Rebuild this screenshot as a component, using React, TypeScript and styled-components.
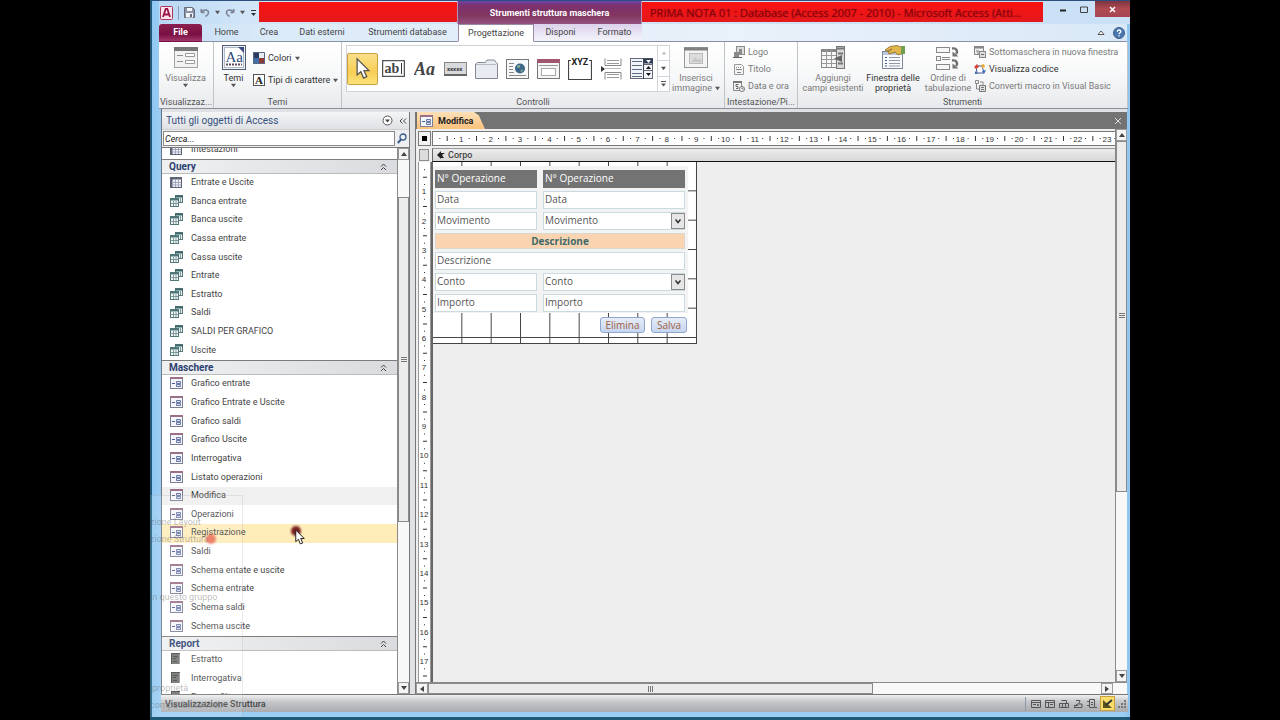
import React, { useEffect, useRef, useState } from 'react';
import styled, { createGlobalStyle, css } from 'styled-components';

const UI = "Roboto, 'Open Sans', 'Noto Sans', sans-serif";
const DOC = "'Open Sans', 'Noto Sans', sans-serif";

const GlobalStyle = createGlobalStyle`
  *, *::before, *::after { box-sizing: border-box; }
  body { margin: 0; background: #000; }
  button, input, select { font: inherit; color: inherit; margin: 0; padding: 0; border: 0; background: none; border-radius: 0; }
  ul { list-style: none; margin: 0; padding: 0; }
  svg { display: block; flex: none; }
`;

/* ---------- window frame ---------- */
const Screen = styled.div`
  display: flex;
  height: 100vh;
  padding: 0 150px;
  background: #000;
  font: 9px/12px ${UI};
  color: #444;
  overflow: hidden;
`;
const Frame = styled.div`
  position: relative;
  display: flex;
  flex-direction: column;
  flex: 1;
  min-width: 0;
  padding: 2px 3px 5px 9px;
  border: solid #1e5a78;
  border-width: 0 0 3px 2px;
  border-top: 1px solid #2c4f80;
  background: linear-gradient(90deg, #8fc8f2, #9ccdf3 10px, #9ccdf3 calc(100% - 6px), #8cc3ef);
`;
const TitleBar = styled.header`
  display: flex;
  height: 23px;
  margin: -2px -3px 0 -2px;
  background: linear-gradient(90deg, #b9d8f4, #d2e6f8 90px, #c9e0f6);
`;
const QuickAccess = styled.div`
  display: flex;
  align-items: center;
  gap: 5px;
  width: 100px;
  padding: 0 0 0 1px;
`;
const IconButton = styled.button`
  display: flex;
  align-items: center;
  justify-content: center;
`;
const VLine = styled.span`
  width: 1px;
  height: 14px;
  background: #8c9aae;
`;
const RedBlock = styled.div<{ $grow?: boolean }>`
  flex: ${p => (p.$grow ? '1 1 0' : '0 0 198px')};
  min-width: 0;
  margin-top: 1px;
  height: 20px;
  padding: 0 8px 0 8px;
  background: linear-gradient(#fb1212, #e3191b);
  color: rgba(110, 0, 12, 0.75);
  font: 11px/22px ${DOC};
  text-shadow: 0 0 1px rgba(110, 0, 12, 0.6);
  white-space: nowrap;
  overflow: hidden;
`;
const ContextTitle = styled.div`
  flex: 0 0 185px;
  border: solid #b792b8;
  border-width: 0 1px;
  background: linear-gradient(#6a45a8, #7b3270 4px, #813560 14px, #92527f);
  color: #fff;
  font: 700 9px/25px ${UI};
  text-align: center;
`;
const WindowButtons = styled.div`
  display: flex;
  flex: 0 0 87px;
  padding-left: 9px;
  button { height: 16px; flex: 0 0 21px; }
  button:last-child { flex: 0 0 35px; margin-left: 1px; background: linear-gradient(#7c3540, #b24a52 50%, #a54651); }
`;

/* ---------- ribbon ---------- */
const TabRow = styled.nav`
  display: flex;
  align-items: stretch;
  height: 18px;
  margin: 0 0 0 -2px;
  background: linear-gradient(90deg, #c4ddf5, #dcebf9 120px, #e9f1fa 60%, #d9e8f7);
`;
const RibbonTab = styled.button<{ $w: number; $kind?: 'file' | 'active' | 'context' }>`
  width: ${p => p.$w}px;
  font-size: 9px;
  line-height: 17px;
  text-align: center;
  border-bottom: 1px solid #8a93a2;
  white-space: nowrap;
  ${p => p.$kind === 'file' && css`
    background: linear-gradient(#8b2050, #7a0f43 60%, #a2386c);
    color: #fff; font-weight: 700; border-radius: 3px 3px 0 0; border-bottom-color: #7a0f43;`}
  ${p => p.$kind === 'active' && css`
    background: #fff; border: 1px solid #9a8aa6; border-bottom-color: #fff; line-height: 15px;`}
  ${p => p.$kind === 'context' && css`background: linear-gradient(#dcd2ec, #f4f4fb);`}
`;
const TabFill = styled.div`
  display: flex;
  flex: 1;
  align-items: center;
  justify-content: flex-end;
  gap: 8px;
  padding-right: 2px;
  border-bottom: 1px solid #8a93a2;
`;
const Ribbon = styled.section`
  display: flex;
  height: 67px;
  margin: 0 -1px 0 -2px;
  background: linear-gradient(#fff, #f7f8f9 50%, #e7e9ec);
  border-bottom: 1px solid #8b8f96;
`;
const Group = styled.div<{ $w?: number }>`
  display: flex;
  flex-direction: column;
  flex: ${p => (p.$w ? `0 0 ${p.$w}px` : '1 1 0')};
  min-width: 0;
  border-right: 1px solid #c0c4c8;
`;
const GroupBody = styled.div<{ $pad?: number; $gap?: number }>`
  display: flex;
  flex: 1;
  gap: ${p => p.$gap ?? 0}px;
  padding: 3px 0 0 ${p => p.$pad ?? 0}px;
`;
const GroupLabel = styled.div`
  height: 12px;
  text-align: center;
  white-space: nowrap;
  color: #555;
`;
const LargeButton = styled.button<{ $w: number; $dim?: boolean }>`
  display: flex;
  flex-direction: column;
  align-items: center;
  flex: 0 0 ${p => p.$w}px;
  line-height: 10px;
  white-space: nowrap;
  color: ${p => (p.$dim ? '#7a7a7a' : '#333')};
`;
const IconSlot = styled.span`
  display: flex;
  align-items: center;
  height: 25px;
  margin-bottom: 3px;
`;
const Caption = styled.span`
  display: flex;
  align-items: center;
  gap: 3px;
`;
const SmallStack = styled.div<{ $gap: number; $top?: number }>`
  display: flex;
  flex-direction: column;
  gap: ${p => p.$gap}px;
  padding-top: ${p => p.$top ?? 0}px;
`;
const SmallButton = styled.button<{ $dim?: boolean }>`
  display: flex;
  align-items: center;
  gap: 3px;
  height: 14px;
  white-space: nowrap;
  color: ${p => (p.$dim ? '#7a7a7a' : '#333')};
`;
const Gallery = styled.div`
  display: flex;
  height: 47px;
  width: 324px;
  background: #fff;
  border: 1px solid #d0d3d8;
`;
const Tool = styled.button<{ $on?: boolean }>`
  display: flex;
  align-items: center;
  justify-content: center;
  align-self: center;
  width: 31px;
  height: 32px;
  ${p => p.$on && css`
    background: linear-gradient(#fbe08a, #f8cf55 60%, #fce27a);
    border: 1px solid #c9a13d; border-radius: 2px;`}
`;
const GalleryScroll = styled.div`
  display: flex;
  flex-direction: column;
  width: 12px;
  border-left: 1px solid #d0d3d8;
  button { flex: 1; display: flex; align-items: center; justify-content: center; }
  button + button { border-top: 1px solid #d0d3d8; }
`;

/* ---------- workspace ---------- */
const Work = styled.main`
  display: flex;
  flex: 1;
  min-height: 0;
  gap: 5px;
  padding-top: 3px;
  background: #dfe1e5;
  border-left: 1px solid #6d7582;
`;
const NavPane = styled.aside`
  display: flex;
  flex-direction: column;
  flex: 0 0 248px;
  min-height: 0;
  background: #fff;
  border-right: 1px solid #777;
`;
const NavTitle = styled.div`
  display: flex;
  align-items: center;
  height: 18px;
  padding: 0 2px 0 4px;
  gap: 6px;
  background: linear-gradient(#f4f5f6, #dfe1e5);
  border-bottom: 1px solid #d0d0d0;
  color: #36507f;
  span { flex: 1; font-size: 10px; }
`;
const SearchRow = styled.div`
  display: flex;
  height: 18px;
  padding: 1px 0;
  background: #eceef0;
  border-bottom: 1px solid #777;
  input { flex: 1; min-width: 0; padding-left: 1px; margin-left: 1px; background: #fff; border: 1px solid #8a8a8a; font-style: italic; }
  input::placeholder { color: #222; opacity: 1; }
  button { width: 14px; }
`;
const NavBody = styled.div`
  display: flex;
  flex: 1;
  min-height: 0;
`;
const NavList = styled.div`
  flex: 1;
  min-width: 0;
  overflow: hidden;
`;
const Clipped = styled.div`
  display: flex;
  align-items: flex-end;
  gap: 8px;
  height: 11px;
  overflow: hidden;
  padding: 0 0 4px 8px;
`;
const SectionHead = styled.button`
  display: flex;
  align-items: center;
  justify-content: space-between;
  width: 100%;
  height: 15px;
  padding: 0 10px 0 7px;
  background: linear-gradient(90deg, #eef0f2, #d9dbde);
  border-top: 1px solid #7c7c7c;
  border-bottom: 1px solid #bbb;
  color: #2b3f70;
  font: 700 10px/12px ${UI};
`;
const Rows = styled.ul<{ $h: number }>`
  display: flex;
  flex-direction: column;
  height: ${p => p.$h}px;
  li { flex: 1; display: flex; }
`;
const NavItem = styled.button<{ $bg?: string }>`
  display: flex;
  align-items: center;
  gap: 8px;
  width: 100%;
  padding: 0 0 2px 8px;
  background: ${p => p.$bg ?? 'transparent'};
  text-align: left;
`;
const VScroll = styled.div`
  display: flex;
  flex-direction: column;
  flex: 0 0 12px;
  background: #f8f8f8;
  border-left: 1px solid #8a8a8a;
`;
const HScroll = styled.div`
  display: flex;
  height: 12px;
  background: #f8f8f8;
  border-top: 1px solid #8a8a8a;
`;
const Arrow = styled.button`
  display: flex;
  align-items: center;
  justify-content: center;
  flex: 0 0 12px;
  background: #f4f4f4;
  border: 1px solid #9a9a9a;
`;
const Gap = styled.div<{ $n: number }>`flex: ${p => p.$n} 1 0;`;
const Thumb = styled.div<{ $n: number }>`
  display: flex;
  align-items: center;
  justify-content: center;
  flex: ${p => p.$n} 1 0;
  background: #ececec;
  border: 1px solid #8a8a8a;
`;

const DocPane = styled.section`
  display: flex;
  flex-direction: column;
  flex: 1;
  min-width: 0;
  border-left: 1px solid #777;
  background: #eee;
`;
const DocTabs = styled.div`
  display: flex;
  justify-content: space-between;
  height: 17px;
  padding: 0 5px 0 1px;
  background: #737373;
`;
const DocTab = styled.button`
  display: flex;
  align-items: center;
  gap: 5px;
  width: 68px;
  padding-left: 3px;
  background: linear-gradient(#fde0b8, #fbc17c);
  clip-path: polygon(0 0, 84% 0, 91% 20%, 100% 100%, 0 100%);
  color: #222;
  font-weight: 700;
`;
const DocBody = styled.div`
  display: flex;
  flex: 1;
  min-height: 0;
`;
const Design = styled.div`
  display: grid;
  flex: 1;
  min-width: 0;
  grid-template-columns: 15px minmax(0, 1fr);
  grid-template-rows: 19px 14px minmax(0, 1fr);
`;
const Corner = styled.div`
  margin: 2px 0 2px 2px;
  border: 1px solid #777;
  background: #f3f3f3;
  display: flex;
  align-items: center;
  justify-content: center;
`;
const HRuler = styled.div`
  margin: 2px 0 2px 1px;
  border: solid #777;
  border-width: 1px 0 1px 1px;
  background: #fff;
  overflow: hidden;
`;
const RulerKnob = styled.div`
  margin: 1px 2px 1px 3px;
  background: #dcdcdc;
  border: 1px solid #8c8c8c;
`;
const SectionBar = styled.div`
  display: flex;
  align-items: center;
  gap: 3px;
  padding-left: 4px;
  margin-left: 1px;
  background: linear-gradient(#ececec, #d8d8d8);
  border-top: 1px solid #999;
  border-left: 1px solid #666;
  border-bottom: 1px solid #111;
  font-weight: 500;
`;
const VRuler = styled.div`
  margin-left: 2px;
  background: #fff;
  border-right: 1px solid #999;
  border-left: 1px solid #999;
  overflow: hidden;
`;
const Canvas = styled.div`
  border-left: 2px solid #666;
  background: #eee;
`;
const FormPage = styled.div`
  width: 264px;
  height: 182px;
  padding-top: 4px;
  border: solid #444;
  border-width: 0 1px 1px 0;
  background-color: #fff;
  background-image: linear-gradient(90deg, transparent calc(100% - 1px), #444 0), linear-gradient(transparent calc(100% - 1px), #444 0);
  background-size: calc(264px / 9) calc(176px / 6);
`;
const FormPanel = styled.form`
  width: 255px;
  display: grid;
  grid-template-columns: 102px 142px;
  grid-template-rows: repeat(7, 1fr);
  column-gap: 6px;
  row-gap: 3px;
  height: 147px;
  padding: 4px 2px 3px 2px;
  background: #f3f3f3;
  font: 10px/14px ${DOC};
  color: #555;
`;
const cell = css<{ $dark?: boolean; $wide?: boolean }>`
  min-width: 0;
  width: 100%;
  padding: 0 2px 2px 1px;
  border: 1px solid #c9dbe0;
  background: #fff;
  ${p => p.$dark && css`background: #737373; border-color: #737373; color: #fff;`}
  ${p => p.$wide && css`grid-column: 1 / -1;`}
`;
const FieldLabel = styled.label`${cell}`;
const Field = styled.input`${cell}`;
const Banner = styled.div`
  grid-column: 1 / -1;
  background: #fad3b1;
  border: 1px solid #d8d8d0;
  color: #3f6a6a;
  font-weight: 700;
  text-align: center;
`;
const Combo = styled.div`
  position: relative;
  display: flex;
  min-width: 0;
  svg { position: absolute; right: 0; top: 1px; pointer-events: none; }
`;
const Select = styled.select`${cell} appearance: none;`;
const FormActions = styled.div`
  display: flex;
  justify-content: flex-end;
  gap: 6px;
  padding: 4px 9px 0 0;
`;
const FormButton = styled.button<{ $w: number }>`
  width: ${p => p.$w}px;
  height: 16px;
  border: 1px solid #8fa6cf;
  border-radius: 3px;
  background: linear-gradient(#e6edf8, #c6d5ee);
  color: #a0603f;
  font: 10px/13px ${DOC};
`;

const StatusBar = styled.footer`
  display: flex;
  align-items: center;
  height: 18px;
  margin-right: -1px;
  padding: 0 2px 0 4px;
  gap: 2px;
  background: linear-gradient(#f0f0f0, #c4c6c9 40%, #a9abae);
  border-top: 1px solid #777;
  font-weight: 500;
  > span:first-child { flex: 1; }
`;
const ViewButtons = styled.div`
  display: flex;
  align-items: center;
  gap: 2px;
  padding-left: 2px;
`;
const ViewButton = styled.button<{ $on?: boolean }>`
  display: flex;
  align-items: center;
  justify-content: center;
  width: ${p => (p.$on ? 15 : 12)}px;
  height: 15px;
  ${p => p.$on && css`background: #fbdd6c; border: 1px solid #c9a13d;`}
`;

/* ---------- overlays ---------- */
const GhostMenu = styled.div`
  position: absolute;
  left: -2px;
  top: 494px;
  width: 93px;
  height: 222px;
  overflow: hidden;
  background: rgba(255, 255, 255, 0.12);
  border: solid rgba(120, 120, 120, 0.15);
  border-width: 1px 1px 0 0;
  color: rgba(90, 90, 90, 0.42);
  pointer-events: none;
  white-space: nowrap;
`;
const GhostLine = styled.div<{ $top: number; $left?: number }>`
  position: absolute;
  left: ${p => p.$left ?? 0}px;
  top: ${p => p.$top}px;
`;
const Dot = styled.div<{ $x: number; $y: number; $c: string }>`
  position: absolute;
  left: ${p => p.$x}px;
  top: ${p => p.$y}px;
  width: 10px;
  height: 10px;
  border-radius: 50%;
  background: ${p => p.$c};
  filter: blur(1px);
`;
const Pointer = styled.div`
  position: absolute;
  left: 143px;
  top: 528px;
`;

/* ---------- icons ---------- */
const Tri = ({ d = 'down', c = '#444', s = 6 }: { d?: 'up' | 'down' | 'left' | 'right'; c?: string; s?: number }) => {
  const p = { down: 'M0 1h6L3 5z', up: 'M0 5h6L3 1z', left: 'M5 0v6L1 3z', right: 'M1 0v6l4-3z' }[d];
  return <svg width={s} height={s} viewBox="0 0 6 6"><path d={p} fill={c} /></svg>;
};
const Drop = () => <Tri s={5} c="#555" />;
const Chevrons = () => (
  <svg width="7" height="8" viewBox="0 0 7 8" fill="none" stroke="#444"><path d="M1 3.5 3.5 1 6 3.5M1 7 3.5 4.5 6 7" /></svg>
);
const FormIcon = () => (
  <svg width="13" height="12" viewBox="0 0 13 12">
    <rect x=".5" y=".5" width="12" height="11" fill="#f4f6fb" stroke="#7b7f95" />
    <path d="M0 1h13" stroke="#9c6f88" strokeWidth="2" />
    <path d="M2 6.500h3" stroke="#4a5f98" />
    <path d="M6.500 4.500h4v2h-4zM6.500 7.500h4v2h-4z" fill="#dbe1f0" stroke="#6a78a4" />
  </svg>
);
const QueryIcon = () => (
  <svg width="13" height="12" viewBox="0 0 13 12">
    <rect x="5.500" y=".5" width="7" height="7" fill="#e4efee" stroke="#56787a" />
    <path d="M5 1.500h8" stroke="#3d6668" strokeWidth="2" />
    <rect x=".5" y="3.500" width="8" height="8" fill="#f4f9f8" stroke="#56787a" />
    <path d="M0 4.500h9" stroke="#4d7678" strokeWidth="2" />
    <path d="M3.500 6v5M6 6v5M1 8.500h7M10.500 3v4" stroke="#7d9a9b" />
  </svg>
);
const TableIcon = () => (
  <svg width="13" height="11" viewBox="0 0 13 11">
    <rect x=".5" y=".5" width="11" height="10" fill="#f1f2f7" stroke="#5f6277" />
    <path d="M0 1.500h12M1.500 0v11" stroke="#5f6277" strokeWidth="2" />
    <path d="M5.500 2v8M8.500 2v8M2 5.500h9M2 8h9" stroke="#a3a7bc" />
  </svg>
);
const ReportIcon = () => (
  <svg width="13" height="12" viewBox="0 0 13 12">
    <path d="M1 1h9v10H1z" fill="#6f716f" />
    <path d="M1 .500h9M1.500 1v10M3 3.500h5M3 5.500h3M3 8.500h4" stroke="#454745" />
    <path d="M9.500 1v10" stroke="#999" />
  </svg>
);
const AccessLogo = () => (
  <svg width="13" height="14" viewBox="0 0 13 14">
    <rect x=".5" y=".5" width="12" height="13" rx="1" fill="#f9e4ec" stroke="#b0325f" />
    <path d="M3 11 5.700 3h1.600L10 11M4 8.500h5" fill="none" stroke="#9c1448" strokeWidth="1.800" />
  </svg>
);
const SaveIcon = () => (
  <svg width="11" height="11" viewBox="0 0 11 11">
    <path d="M.5.5h8l2 2v8H.5z" fill="#8c93a3" stroke="#666d7d" /><path d="M3 1h5v3H3zM2 6h7v4.500H2z" fill="#f3f5f8" /><path d="M6 7h2v3H6z" fill="#666d7d" />
  </svg>
);
const UndoIcon = ({ flip }: { flip?: boolean }) => (
  <svg width="10" height="10" viewBox="0 0 10 10" fill="none" stroke="#7b8291" strokeWidth="1.600">
    <path d={flip ? 'M8.500 4.500H5.500M8.700 1v3.700M8.300 4C6 1 1 1.500 1.500 5c.2 1.500 1.500 2.500 3 3.500' : 'M1.500 4.500h3M1.300 1v3.700M1.700 4C4 1 9 1.500 8.500 5c-.2 1.500-1.500 2.500-3 3.500'} />
  </svg>
);
const HelpIcon = () => (
  <svg width="12" height="12" viewBox="0 0 12 12">
    <circle cx="6" cy="6" r="5.500" fill="#4a78b0" stroke="#3d5f8c" />
    <path d="M4.300 4.700c0-2.300 3.500-2.200 3.500-.2C7.800 5.800 6 5.700 6 7.300M6 8.300v1.300" fill="none" stroke="#fff" strokeWidth="1.300" />
  </svg>
);
const ViewBig = () => (
  <svg width="24" height="21" viewBox="0 0 24 21">
    <rect x=".5" y=".5" width="23" height="20" fill="#f2f2f2" stroke="#a2a2a2" /><path d="M0 2h24" stroke="#777" strokeWidth="4" />
    <path d="M3 8.500h6M3 14.500h6" stroke="#8e8e8e" /><path d="M11.500 6.500h9v3h-9zM11.500 13.500h9v3h-9z" fill="#fff" stroke="#9a9a9a" />
  </svg>
);
const ImageBig = () => (
  <svg width="24" height="21" viewBox="0 0 24 21">
    <rect x=".5" y=".5" width="23" height="20" fill="#f4f4f4" stroke="#999" /><path d="M0 2h24" stroke="#808080" strokeWidth="3" />
    <rect x="5.500" y="6.500" width="13" height="10" fill="#ddd" stroke="#bbb" /><path d="m7 15 4-5 3 3 2-2 2 4z" fill="#c7c7c7" />
  </svg>
);
const ThemeBig = () => (
  <svg width="24" height="25" viewBox="0 0 24 25">
    <rect x=".5" y=".5" width="23" height="24" fill="#eaf0f8" stroke="#555d70" /><rect x="2.500" y="2.500" width="19" height="20" fill="#fff" stroke="#b0b8c8" />
    <path d="M16 2h6v6z" fill="#3c4a80" />
    <text x="3.500" y="16.500" fontFamily="Liberation Serif, serif" fontSize="15" fill="#2b4a7c">Aa</text>
    <path d="M4 19.500h16" stroke="#5b4a5b" strokeWidth="2" strokeDasharray="2 1" />
  </svg>
);
const ColorsIcon = () => (
  <svg width="12" height="12" viewBox="0 0 12 12">
    <path d="M0 0h6v6H0z" fill="#293a5c" /><path d="M6 0h6v6H6z" fill="#e8ebf2" /><path d="M0 6h6v6H0z" fill="#3f6ea8" /><path d="M6 6h6v6H6z" fill="#8c3b35" /><path d="M.5.500h11v11H.5z" fill="none" stroke="#596780" />
  </svg>
);
const FontsIcon = () => (
  <svg width="12" height="12" viewBox="0 0 12 12">
    <rect x=".5" y=".5" width="11" height="11" fill="#fff" stroke="#555" /><text x="2" y="10" fontFamily="Liberation Serif, serif" fontWeight="700" fontSize="11" fill="#222">A</text>
  </svg>
);
const CursorPath = 'M1 1v15l3.500-3 2.500 6 3-1.300-2.600-5.700H12z';
const toolIcons: [string, React.ReactNode][] = [
  ['Seleziona', <svg width="16" height="24" viewBox="-1 0 15 21"><path d={CursorPath} fill="#fff" stroke="#555" strokeWidth="1.200" /></svg>],
  ['Casella di testo', <svg width="23" height="17" viewBox="0 0 23 17"><rect x=".5" y=".5" width="22" height="16" fill="#fff" stroke="#555" strokeWidth="1.500" /><text x="2.500" y="13" fontFamily="Liberation Serif, serif" fontSize="14" fontWeight="700" fill="#444">ab</text><path d="M19.500 3v11" stroke="#333" /></svg>],
  ['Etichetta', <svg width="22" height="18" viewBox="0 0 22 18"><text x="0" y="15" fontFamily="Liberation Serif, serif" fontStyle="italic" fontWeight="700" fontSize="18" fill="#444">Aa</text></svg>],
  ['Pulsante', <svg width="23" height="14" viewBox="0 0 23 14"><rect x=".5" y=".5" width="22" height="13" fill="#d7d9dd" stroke="#888" /><path d="M0 13h23" stroke="#666" strokeWidth="2" /><text x="3" y="9" fontFamily="Roboto, sans-serif" fontWeight="700" fontSize="6" fill="#333">xxxxx</text></svg>],
  ['Struttura a schede', <svg width="23" height="20" viewBox="0 0 23 20"><path d="M.500 19.500V5l2-1.500h8L12 1h7.500l1.500 2.500 1.500 1v15z" fill="#e9ebf2" stroke="#858892" /><path d="M1 5.500h20" stroke="#b8bac4" /></svg>],
  ['Collegamento', <svg width="23" height="20" viewBox="0 0 23 20"><rect x=".5" y=".5" width="22" height="19" fill="#f6f8fa" stroke="#777" /><path d="M3 4.500h5M3 7.500h4M3 10.500h4M3 13.500h5M3 16.500h17" stroke="#888" /><circle cx="14" cy="9.500" r="5" fill="#3d6788" /><path d="M11 7c2-2 4-1 3 1s-3 1-3-1M14 12l3-2-1 3z" fill="#86b09a" /></svg>],
  ['Controllo Web', <svg width="23" height="20" viewBox="0 0 23 20"><rect x=".5" y=".5" width="22" height="19" fill="#f6f6f8" stroke="#777" /><path d="M0 2h23" stroke="#a0566f" strokeWidth="4" /><path d="M2 6.500h19" stroke="#999" /><rect x="4.500" y="9.500" width="14" height="7" fill="#fff" stroke="#aaa" /></svg>],
  ['Gruppo di opzioni', <svg width="24" height="23" viewBox="0 0 24 23"><path d="M3 3.500H.5v19h23v-19H21" fill="#fff" stroke="#444" strokeWidth="1.200" /><text x="3.500" y="7.500" fontFamily="Roboto, sans-serif" fontWeight="700" fontSize="9" fill="#222">XYZ</text></svg>],
  ['Interruzione di pagina', <svg width="22" height="22" viewBox="0 0 22 22"><path d="M1 8v6l4-3z" fill="#333" /><path d="M5 .500v7h16v-7M5 21.500v-7h16v7" fill="none" stroke="#888" /><path d="M7 2.500h12M7 5.500h12M7 16.500h12M7 19.500h12" stroke="#999" /><path d="M5 10.500h16" stroke="#bbb" /></svg>],
  ['Casella combinata', <svg width="23" height="21" viewBox="0 0 23 21"><rect x=".5" y=".5" width="22" height="20" fill="#f1f4f8" stroke="#667" /><path d="M2 3.500h10M2 7.500h10M2 11.500h10M2 15.500h10M2 18.500h10" stroke="#5c6a86" /><path d="M13.500 0v21" stroke="#445" /><path d="M14 .500h9v5h-9z" fill="#2f3a55" /><path d="M16 2h5l-2.500 3z" fill="#fff" /><path d="M16 11h5l-2.500-3zM16 15h5l-2.500 3z" fill="#111" /><path d="M14 6.500h9M14 12.500h9" stroke="#667" /></svg>],
];
const LogoIcon = () => (
  <svg width="12" height="12" viewBox="0 0 12 12"><rect x="3.500" y=".5" width="8" height="8" fill="#ddd" stroke="#8a8a8a" /><path d="M1 6h5v5H1zM6 3h3v6H6z" fill="#8a8a8a" /><path d="M0 11.500h9" stroke="#666" /></svg>
);
const TitleIcon = () => (
  <svg width="12" height="12" viewBox="0 0 12 12"><path d="M1.500 1.500h7l2 2v8h-9z" fill="#f5f5f5" stroke="#9a9a9a" /><path d="M3 4.500h1M5 4.500h1M7 4.500h1M3 6.500h6M4 9.500h4" stroke="#888" /></svg>
);
const DateIcon = () => (
  <svg width="12" height="12" viewBox="0 0 12 12"><path d="M.5 1.500h8v9h-8z" fill="#f3f3f3" stroke="#888" /><path d="M0 2h9" stroke="#777" strokeWidth="2" /><path d="M5.500 4.500H3v2h2v2H3" stroke="#666" fill="none" /><circle cx="9" cy="9" r="2.500" fill="#fff" stroke="#777" /><path d="M9 7.500V9h1.500" stroke="#666" fill="none" /></svg>
);
const FieldsBig = () => (
  <svg width="24" height="24" viewBox="0 0 24 24">
    <rect x=".5" y="3.500" width="15" height="18" fill="#f6f6f6" stroke="#888" /><path d="M0 5h16" stroke="#888" strokeWidth="2" /><path d="M5.500 4v17M10.500 4v17M1 9.500h14M1 13.500h14M1 17.500h14" stroke="#999" />
    <rect x="15.500" y=".5" width="8" height="22" fill="#d8d8d8" stroke="#777" /><path d="M16 2.500h7M17 7.500h5M17 17.500h5" stroke="#777" strokeWidth="2" /><path d="M21 9v7l-8-3.500z" fill="#666" />
  </svg>
);
const PropsBig = () => (
  <svg width="24" height="25" viewBox="0 0 24 25">
    <rect x="1.500" y="6.500" width="20" height="17" fill="#fafbfd" stroke="#7e8796" /><path d="M2 8.500h19" stroke="#bcc6d6" strokeWidth="3" />
    <path d="M4 12.500h2M4 15.500h2M4 18.500h2M4 21h2" stroke="#3a5a92" /><path d="M8 12.500h11M8 15.500h11M8 18.500h11M8 21h11" stroke="#8d98aa" />
    <path d="M4 5 9 1.500l7-1 5 2v6l-4 1.500-3-3-6 2-1-2 4-3-5 2z" fill="#e1b64c" stroke="#8c6a24" strokeWidth=".8" /><path d="M20 1h4v8h-4z" fill="#6fa04e" />
  </svg>
);
const OrderBig = () => (
  <svg width="24" height="24" viewBox="0 0 24 24" fill="#f6f6f6" stroke="#888">
    <rect x=".5" y="1.500" width="13" height="5" /><rect x=".5" y="10.500" width="4" height="4" /><path d="M6 11.500h8M6 13.500h8" /><rect x=".5" y="18.500" width="13" height="5" />
    <path d="M16 2.500c5-1 6 3.500 4 5.500M16 14.500c5-1 6 3.500 4 5.500" fill="none" stroke="#707070" strokeWidth="2.400" />
    <path d="M16.500 5.500v5h6zM16.500 17.500v5h6z" fill="#707070" stroke="none" />
  </svg>
);
const SubformIcon = () => (
  <svg width="12" height="12" viewBox="0 0 12 12"><rect x=".5" y=".5" width="9" height="8" fill="#eee" stroke="#888" /><path d="M0 1.500h10" stroke="#888" strokeWidth="2" /><path d="M2 5h3M3 7h3" stroke="#777" /><rect x="5.500" y="5.500" width="6" height="6" fill="#ddd" stroke="#888" /><path d="M7 8.500h3" stroke="#666" /></svg>
);
const CodeIcon = () => (
  <svg width="12" height="12" viewBox="0 0 12 12"><path d="M2 3h6l2 7H3z" fill="#fff" stroke="#44598c" /><path d="m0 4 3-3 2 3-3 2z" fill="#d8443a" /><path d="m7 2 3-1 1 3-3 1z" fill="#e9a92e" /><path d="m1 8 3 3H1zM8 8l4-1-2 4z" fill="#3c67b5" /></svg>
);
const MacroIcon = () => (
  <svg width="12" height="12" viewBox="0 0 12 12"><path d="M1.500.500h3v3h-3zM6 2h3v3M2.500 4v5H5" fill="none" stroke="#888" /><path d="M5.500 5.500h6v6h-6z" fill="#e2e2e2" stroke="#777" /><path d="M7 7.500h3M7 9.500h3" stroke="#777" /></svg>
);
const statusIcons = [
  'M.5 1.500h9v7h-9zM1 3.500h8M2 5.500h3M6.500 5.500h1v1h-1z',
  'M.5 1.500h9v7h-9zM1 3.500h8M3.500 3v5M5 5.500h3',
  'M2.500 1.500h5v3M.5 4.500h9v4h-9zM3.500 4v4M6.500 4v4',
  'M3 1.500h4l-1 3M1 8.500 4 5h5v3.500zM1 6.500h4',
  'M2.500.500h5v8h-5zM0 2.500h2M0 6.500h2M4 3.500h2M4 5.500h2M8 8.500h2',
];

/* One centimetre on the rulers. */
const CM = 675 / 23;

/* Number of whole centimetres that fit in the element's width or height. */
function useCentimetres(axis: 'width' | 'height') {
  const ref = useRef<HTMLDivElement>(null);
  const [count, setCount] = useState(0);
  useEffect(() => {
    const el = ref.current;
    if (!el) return;
    const measure = () => setCount(Math.floor((el.getBoundingClientRect()[axis] - 5) / CM) + 1);
    measure();
    const observer = new ResizeObserver(measure);
    observer.observe(el);
    return () => observer.disconnect();
  }, [axis]);
  return [ref, count] as const;
}
const HorizontalRuler = () => {
  const [ref, count] = useCentimetres('width');
  return (
    <HRuler ref={ref}>
      <svg width="100%" height="13">
        {Array.from({ length: count }, (_, i) => {
          const x = i * CM;
          return (
            <g key={i} fill="#333">
              {i > 0 && <text x={x - 1} y="10" textAnchor="middle" fontFamily="Liberation Sans, sans-serif" fontSize="8">{i}</text>}
              <path d={`M${x + CM / 4 - 1} 6h1v1h-1zM${x + CM / 2 - 1} 4h1v5h-1zM${x + CM * 0.75 - 1} 6h1v1h-1z`} />
            </g>
          );
        })}
      </svg>
    </HRuler>
  );
};
const VerticalRuler = () => {
  const [ref, count] = useCentimetres('height');
  return (
    <VRuler ref={ref}>
      <svg width="11" height="100%">
        {Array.from({ length: count }, (_, i) => {
          const y = i * CM;
          return (
            <g key={i} fill="#333">
              {i > 0 && <text x="5" y={y + 3} textAnchor="middle" fontFamily="Liberation Sans, sans-serif" fontSize="8">{i}</text>}
              <path d={`M5 ${y + CM / 4}h1v1h-1zM4 ${y + CM / 2}h4v1h-4zM5 ${y + CM * 0.75}h1v1h-1z`} />
            </g>
          );
        })}
      </svg>
    </VRuler>
  );
};
const Grip = ({ flat }: { flat?: boolean }) => (
  <svg width="6" height="6" viewBox="0 0 6 6" stroke="#777"><path d={flat ? 'M.500 0v6M2.500 0v6M4.500 0v6' : 'M0 .500h6M0 2.500h6M0 4.500h6'} /></svg>
);
const ComboArrow = () => (
  <svg width="14" height="16" viewBox="0 0 14 16"><rect x=".5" y=".5" width="13" height="15" fill="#e6e6e6" stroke="#8a8a8a" /><path d="m4.500 6.500 2.500 3 2.500-3" fill="none" stroke="#333" strokeWidth="1.500" /></svg>
);

/* ---------- data ---------- */
const queries = ['Banca entrate', 'Banca uscite', 'Cassa entrate', 'Cassa uscite', 'Entrate', 'Estratto', 'Saldi', 'SALDI PER GRAFICO', 'Uscite'];
const forms = ['Grafico entrate', 'Grafico Entrate e Uscite', 'Grafico saldi', 'Grafico Uscite', 'Interrogativa', 'Listato operazioni', 'Modifica', 'Operazioni', 'Registrazione', 'Saldi', 'Schema entate e uscite', 'Schema entrate', 'Schema saldi', 'Schema uscite'];
const reports = ['Estratto', 'Interrogativa', 'Report filtro'];
const rowTint: Record<string, string> = { Modifica: '#f0f0f0', Registrazione: '#feecb9' };

const Item = ({ icon, name, bg }: { icon: React.ReactNode; name: string; bg?: string }) => (
  <li><NavItem $bg={bg}>{icon}{name}</NavItem></li>
);
const Section = ({ title }: { title: string }) => <SectionHead>{title}<Chevrons /></SectionHead>;

export default function App() {
  return (
    <>
      <GlobalStyle />
      <Screen>
        <Frame>
          <TitleBar>
            <QuickAccess>
              <AccessLogo /><VLine />
              <IconButton aria-label="Salva file"><SaveIcon /></IconButton>
              <IconButton aria-label="Annulla"><UndoIcon /></IconButton><Drop />
              <IconButton aria-label="Ripeti"><UndoIcon flip /></IconButton><Drop />
              <IconButton aria-label="Personalizza"><svg width="7" height="8" viewBox="0 0 7 8"><path d="M1 1.500h5" stroke="#333" /><path d="M1 4h5L3.500 7z" fill="#333" /></svg></IconButton>
            </QuickAccess>
            <RedBlock />
            <ContextTitle>Strumenti struttura maschera</ContextTitle>
            <RedBlock $grow>PRIMA NOTA 01 : Database (Access 2007 - 2010) - Microsoft Access (Atti...</RedBlock>
            <WindowButtons>
              <IconButton aria-label="Riduci"><svg width="8" height="8"><path d="M1 5.500h6" stroke="#222" strokeWidth="2" /></svg></IconButton>
              <IconButton aria-label="Ingrandisci"><svg width="8" height="7"><path d="M.5 1h7v5.500h-7z" fill="none" stroke="#444" /></svg></IconButton>
              <IconButton aria-label="Chiudi"><svg width="7" height="7"><path d="m1 1 5 5M6 1 1 6" stroke="#fff" strokeWidth="1.500" /></svg></IconButton>
            </WindowButtons>
          </TitleBar>
          <TabRow>
            <RibbonTab $w={43} $kind="file">File</RibbonTab>
            <RibbonTab $w={49}>Home</RibbonTab>
            <RibbonTab $w={36}>Crea</RibbonTab>
            <RibbonTab $w={70}>Dati esterni</RibbonTab>
            <RibbonTab $w={101}>Strumenti database</RibbonTab>
            <RibbonTab $w={76} $kind="active">Progettazione</RibbonTab>
            <RibbonTab $w={53} $kind="context">Disponi</RibbonTab>
            <RibbonTab $w={55} $kind="context">Formato</RibbonTab>
            <TabFill>
              <svg width="8" height="7" viewBox="0 0 8 7"><path d="M1 5.500 4 2l3 3.500z" fill="#fff" stroke="#555" /></svg>
              <IconButton aria-label="Guida"><HelpIcon /></IconButton>
            </TabFill>
          </TabRow>
          <Ribbon>
            <Group $w={55}>
              <GroupBody>
                <LargeButton $w={53} $dim><IconSlot><ViewBig /></IconSlot><span>Visualizza</span><Drop /></LargeButton>
              </GroupBody>
              <GroupLabel>Visualizzaz...</GroupLabel>
            </Group>
            <Group $w={128}>
              <GroupBody $pad={4} $gap={4}>
                <LargeButton $w={31}><IconSlot><ThemeBig /></IconSlot><span>Temi</span><Drop /></LargeButton>
                <SmallStack $gap={8} $top={6}>
                  <SmallButton><ColorsIcon />Colori<Drop /></SmallButton>
                  <SmallButton><FontsIcon />Tipi di carattere<Drop /></SmallButton>
                </SmallStack>
              </GroupBody>
              <GroupLabel>Temi</GroupLabel>
            </Group>
            <Group $w={383}>
              <GroupBody $pad={4}>
                <Gallery>
                  {toolIcons.map(([name, icon], i) => <Tool key={name} aria-label={name} $on={i === 0}>{icon}</Tool>)}
                  <GalleryScroll>
                    <button aria-label="Su"><Tri d="up" s={4} c="#aaa" /></button>
                    <button aria-label="Giù"><Drop /></button>
                    <button aria-label="Altro"><svg width="5" height="6"><path d="M0 .500h5" stroke="#555" /><path d="M0 2.500h5L2.500 5.500z" fill="#555" /></svg></button>
                  </GalleryScroll>
                </Gallery>
                <LargeButton $w={52} $dim><IconSlot><ImageBig /></IconSlot><span>Inserisci</span><Caption>immagine<Drop /></Caption></LargeButton>
              </GroupBody>
              <GroupLabel>Controlli</GroupLabel>
            </Group>
            <Group $w={73}>
              <GroupBody $pad={8}>
                <SmallStack $gap={3}>
                  <SmallButton $dim><LogoIcon />Logo</SmallButton>
                  <SmallButton $dim><TitleIcon />Titolo</SmallButton>
                  <SmallButton $dim><DateIcon />Data e ora</SmallButton>
                </SmallStack>
              </GroupBody>
              <GroupLabel>Intestazione/Pi...</GroupLabel>
            </Group>
            <Group>
              <GroupBody $pad={4}>
                <LargeButton $w={62} $dim><IconSlot><FieldsBig /></IconSlot><span>Aggiungi</span><span>campi esistenti</span></LargeButton>
                <LargeButton $w={58}><IconSlot><PropsBig /></IconSlot><span>Finestra delle</span><span>proprietà</span></LargeButton>
                <LargeButton $w={52} $dim><IconSlot><OrderBig /></IconSlot><span>Ordine di</span><span>tabulazione</span></LargeButton>
                <SmallStack $gap={3}>
                  <SmallButton $dim><SubformIcon />Sottomaschera in nuova finestra</SmallButton>
                  <SmallButton><CodeIcon />Visualizza codice</SmallButton>
                  <SmallButton $dim><MacroIcon />Converti macro in Visual Basic</SmallButton>
                </SmallStack>
              </GroupBody>
              <GroupLabel>Strumenti</GroupLabel>
            </Group>
          </Ribbon>

          <Work>
            <NavPane>
              <NavTitle>
                <span>Tutti gli oggetti di Access</span>
                <IconButton aria-label="Menu"><svg width="11" height="11"><circle cx="5.500" cy="5.500" r="4.500" fill="#fff" stroke="#555" /><path d="M3 4.500h5l-2.500 3z" fill="#444" /></svg></IconButton>
                <IconButton aria-label="Comprimi"><svg width="8" height="8" fill="none" stroke="#444"><path d="M3.500 1.500 1 4l2.500 2.500M7 1.500 4.500 4 7 6.500" /></svg></IconButton>
              </NavTitle>
              <SearchRow>
                <input aria-label="Cerca" placeholder="Cerca..." />
                <IconButton aria-label="Avvia ricerca"><svg width="10" height="11" fill="none" stroke="#3a5a8a"><circle cx="6" cy="4" r="3" strokeWidth="1.300" /><path d="M4 6.500.800 10" strokeWidth="2" /></svg></IconButton>
              </SearchRow>
              <NavBody>
                <NavList>
                  <Clipped><TableIcon />Intestazioni</Clipped>
                  <Section title="Query" />
                  <Rows $h={186}>
                    <Item icon={<TableIcon />} name="Entrate e Uscite" />
                    {queries.map(n => <Item key={n} icon={<QueryIcon />} name={n} />)}
                  </Rows>
                  <Section title="Maschere" />
                  <Rows $h={261}>
                    {forms.map(n => <Item key={n} icon={<FormIcon />} name={n} bg={rowTint[n]} />)}
                  </Rows>
                  <Section title="Report" />
                  <Rows $h={56}>
                    {reports.map(n => <Item key={n} icon={<ReportIcon />} name={n} />)}
                  </Rows>
                </NavList>
                <VScroll>
                  <Arrow aria-label="Scorri su"><Tri d="up" /></Arrow>
                  <Gap $n={37} /><Thumb $n={323}><Grip /></Thumb><Gap $n={160} />
                  <Arrow aria-label="Scorri giù"><Tri /></Arrow>
                </VScroll>
              </NavBody>
            </NavPane>

            <DocPane>
              <DocTabs>
                <DocTab><FormIcon />Modifica</DocTab>
                <IconButton aria-label="Chiudi scheda"><svg width="8" height="8"><path d="m1 1 6 6M7 1 1 7" stroke="#ddd" /></svg></IconButton>
              </DocTabs>
              <DocBody>
                <Design>
                  <Corner><svg width="5" height="5"><path d="M0 0h5v5H0z" /></svg></Corner>
                  <HorizontalRuler />
                  <RulerKnob />
                  <SectionBar><svg width="8" height="8"><path d="M0 4 4 0v2h4L5 4l2 3H4v1z" fill="#222" /></svg>Corpo</SectionBar>
                  <VerticalRuler />
                  <Canvas>
                    <FormPage>
                      <FormPanel>
                        <FieldLabel htmlFor="op" $dark>N° Operazione</FieldLabel><Field id="op" defaultValue="N° Operazione" $dark />
                        <FieldLabel htmlFor="data">Data</FieldLabel><Field id="data" defaultValue="Data" />
                        <FieldLabel htmlFor="mov">Movimento</FieldLabel>
                        <Combo><Select id="mov"><option>Movimento</option></Select><ComboArrow /></Combo>
                        <Banner>Descrizione</Banner>
                        <Field aria-label="Descrizione" defaultValue="Descrizione" $wide />
                        <FieldLabel htmlFor="conto">Conto</FieldLabel>
                        <Combo><Select id="conto"><option>Conto</option></Select><ComboArrow /></Combo>
                        <FieldLabel htmlFor="imp">Importo</FieldLabel><Field id="imp" defaultValue="Importo" />
                      </FormPanel>
                      <FormActions>
                        <FormButton $w={45}>Elimina</FormButton>
                        <FormButton $w={36}>Salva</FormButton>
                      </FormActions>
                    </FormPage>
                  </Canvas>
                </Design>
                <VScroll>
                  <Arrow aria-label="Su"><Tri d="up" /></Arrow>
                  <Thumb $n={348}><Grip /></Thumb><Gap $n={178} />
                  <Arrow aria-label="Giù"><Tri /></Arrow>
                </VScroll>
              </DocBody>
              <HScroll>
                <Arrow aria-label="Sinistra"><Tri d="left" /></Arrow>
                <Thumb $n={444}><Grip flat /></Thumb><Gap $n={228} />
                <Arrow aria-label="Destra"><Tri d="right" /></Arrow>
                <Gap $n={14} />
              </HScroll>
            </DocPane>
          </Work>

          <StatusBar>
            <span>Visualizzazione Struttura</span>
            <VLine />
            <ViewButtons>
              {statusIcons.map((d, i) => (
                <ViewButton key={d} aria-label={`Vista ${i + 1}`}><svg width="10" height="9" fill="none" stroke="#555"><path d={d} /></svg></ViewButton>
              ))}
              <ViewButton $on aria-label="Visualizzazione Struttura"><svg width="11" height="10" viewBox="0 0 11 10"><path d="M1 1v8h9z" fill="#5a5020" /><path d="m4 6 6-5" stroke="#333" strokeWidth="2" /></svg></ViewButton>
            </ViewButtons>
            <svg width="9" height="9" fill="#777"><path d="M7 1h2v2H7zM4 4h2v2H4zM7 4h2v2H7zM1 7h2v2H1zM4 7h2v2H4zM7 7h2v2H7z" /></svg>
          </StatusBar>

          <GhostMenu>
            <GhostLine $top={20}>zione Layout</GhostLine>
            <GhostLine $top={37}>zione Struttura</GhostLine>
            <GhostLine $top={95}>in questo gruppo</GhostLine>
            <GhostLine $top={186} $left={2}>proprietà</GhostLine>
            <GhostLine $top={203}>compatibilità Web</GhostLine>
          </GhostMenu>
          <Dot $x={54} $y={533} $c="rgba(225, 60, 50, 0.6)" />
          <Dot $x={139} $y={525} $c="#7a1f1f" />
          <Pointer><svg width="10" height="16" viewBox="0 0 13 20"><path d={CursorPath} fill="#fff" stroke="#111" strokeWidth="1.200" /></svg></Pointer>
        </Frame>
      </Screen>
    </>
  );
}
